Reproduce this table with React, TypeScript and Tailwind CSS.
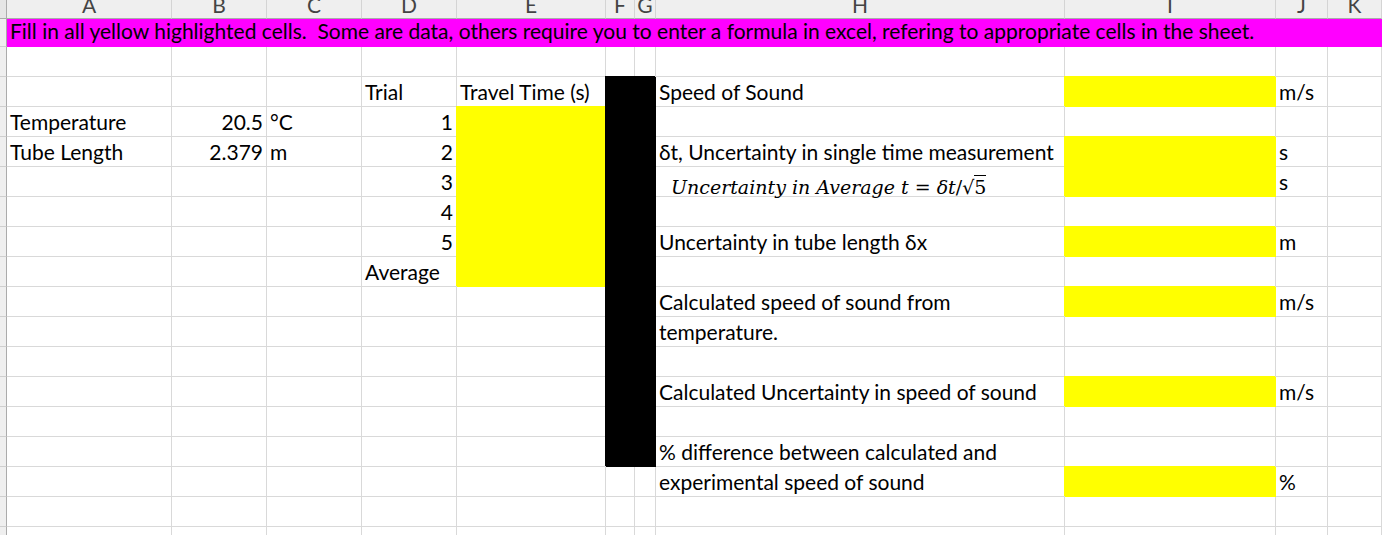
import React from "react";

type Fill = "yellow" | "black";

interface CellDef {
  text?: React.ReactNode;
  fill?: Fill;
  right?: boolean;
  className?: string;
}

const COLS = ["A", "B", "C", "D", "E", "F", "G", "H", "I", "J", "K"];

const yellow: CellDef = { fill: "yellow" };
const black: CellDef = { fill: "black" };

const formula = (
  <span className="font-['DejaVu_Serif',serif] italic text-[19px]">
    Uncertainty in Average t <span className="not-italic">=</span> δt
    <span className="not-italic">/√</span>
    <span className="not-italic border-t border-black">5</span>
  </span>
);

// rows 2.. of the sheet, keyed by column letter
const rows: Record<string, CellDef>[] = [
  {},
  {
    D: { text: "Trial" },
    E: { text: "Travel Time (s)" },
    F: black,
    G: black,
    H: { text: "Speed of Sound" },
    I: yellow,
    J: { text: "m/s" },
  },
  {
    A: { text: "Temperature" },
    B: { text: "20.5", right: true },
    C: { text: "°C" },
    D: { text: "1", right: true },
    E: yellow,
    F: black,
    G: black,
  },
  {
    A: { text: "Tube Length" },
    B: { text: "2.379", right: true },
    C: { text: "m" },
    D: { text: "2", right: true },
    E: yellow,
    F: black,
    G: black,
    H: { text: "δt, Uncertainty in single time measurement" },
    I: yellow,
    J: { text: "s" },
  },
  {
    D: { text: "3", right: true },
    E: yellow,
    F: black,
    G: black,
    H: { text: formula, className: "pl-[15px] pt-[4px]" },
    I: yellow,
    J: { text: "s" },
  },
  { D: { text: "4", right: true }, E: yellow, F: black, G: black },
  {
    D: { text: "5", right: true },
    E: yellow,
    F: black,
    G: black,
    H: { text: "Uncertainty in tube length δx" },
    I: yellow,
    J: { text: "m" },
  },
  { D: { text: "Average" }, E: yellow, F: black, G: black },
  {
    F: black,
    G: black,
    H: { text: "Calculated speed of sound from" },
    I: yellow,
    J: { text: "m/s" },
  },
  { F: black, G: black, H: { text: "temperature." } },
  { F: black, G: black },
  {
    F: black,
    G: black,
    H: { text: "Calculated Uncertainty in speed of sound" },
    I: yellow,
    J: { text: "m/s" },
  },
  { F: black, G: black },
  { F: black, G: black, H: { text: "% difference between calculated and" } },
  { H: { text: "experimental speed of sound" }, I: yellow, J: { text: "%" } },
  {},
  {},
];

function Cell({ def }: { def?: CellDef }) {
  const fillCls =
    def?.fill === "yellow"
      ? "bg-[#ffff00] border-[#ffff00] shadow-[-1px_-1px_0_0_#ffff00]"
      : def?.fill === "black"
        ? "bg-black border-black shadow-[-1px_-1px_0_0_#000000]"
        : "border-[#d9d9d9]";
  return (
    <div
      className={`h-[30px] border-r border-b px-[3px] leading-[29px] whitespace-nowrap ${fillCls} ${
        def?.right ? "text-right" : ""
      } ${def?.className ?? ""}`}
    >
      {def?.text}
    </div>
  );
}

export default function App() {
  return (
    <div className="h-[535px] w-[1382px] overflow-hidden bg-white">
      <div className="grid grid-cols-[7px_165px_95px_95px_95px_149px_29px_21px_409px_211px_52px_1fr] font-['Lato',sans-serif] text-[21px] text-black">
        {/* column headers */}
        <div className="h-[19px] bg-[#e6e6e6] border-r border-b border-[#ababab]" />
        {COLS.map((c) => (
          <div
            key={c}
            className="h-[19px] overflow-hidden bg-[#efefef] border-r border-r-[#d4d4d4] border-b border-b-[#ababab] text-center leading-[10px] text-[#444444]"
          >
            {c}
          </div>
        ))}

        {/* row 1: instructions */}
        <div className="h-[28px] bg-[#efefef] border-r border-r-[#ababab] border-b border-b-[#cfcfcf]" />
        <div className="col-span-11 h-[28px] bg-[#ff00ff] border-b border-[#ff00ff] pl-[3px] leading-[23px] whitespace-nowrap">
          Fill in all yellow highlighted cells.&nbsp; Some are data, others require you to enter a formula in excel, refering to appropriate cells in the sheet.
        </div>

        {rows.map((row, i) => (
          <React.Fragment key={i}>
            <div className="h-[30px] bg-[#efefef] border-r border-r-[#ababab] border-b border-b-[#cfcfcf]" />
            {COLS.map((c) => (
              <Cell key={c} def={row[c]} />
            ))}
          </React.Fragment>
        ))}
      </div>
    </div>
  );
}
